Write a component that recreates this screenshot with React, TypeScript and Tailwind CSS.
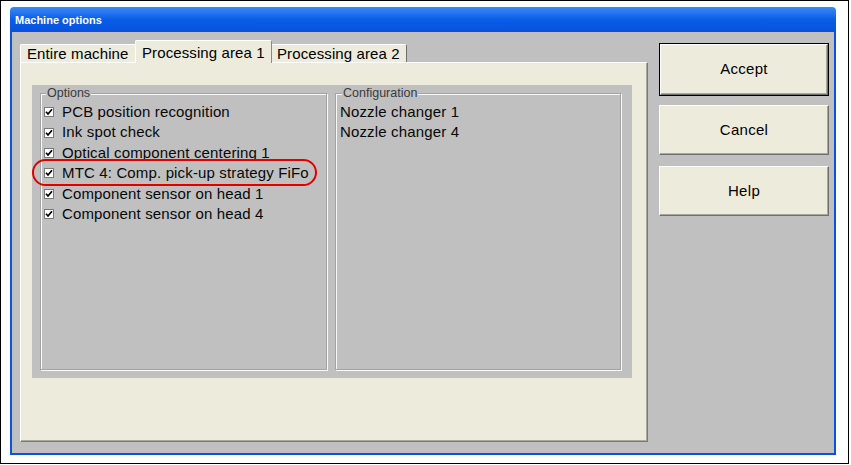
import React from "react";

const options = [
  "PCB position recognition",
  "Ink spot check",
  "Optical component centering 1",
  "MTC 4: Comp. pick-up strategy FiFo",
  "Component sensor on head 1",
  "Component sensor on head 4",
];

const config = ["Nozzle changer 1", "Nozzle changer 4"];

function Check() {
  return (
    <span className="w-[10px] h-[10px] bg-white border border-[#7a7a7a] flex items-center justify-center shrink-0">
      <svg width="8" height="8" viewBox="0 0 8 8">
        <path d="M1 3.8 L3 6 L7 1.2" stroke="#000" strokeWidth="1.7" fill="none" />
      </svg>
    </span>
  );
}

function Btn({ label, def }: { label: string; def?: boolean }) {
  const inner = (
    <div className="w-full h-full bg-[#ecebdc] border-t border-l border-white border-r border-b border-r-[#6f6f6f] border-b-[#6f6f6f] shadow-[inset_-1px_-1px_0_#a8a89a] flex items-center justify-center text-[15px] tracking-[0.3px] text-black">
      {label}
    </div>
  );
  return def ? (
    <div className="h-[53px] border border-black">{inner}</div>
  ) : (
    <div className="h-[50px]">{inner}</div>
  );
}

export default function App() {
  return (
    <div
      className="w-[851px] h-[465px] bg-white overflow-hidden"
      style={{ fontFamily: '"Liberation Sans", Arial, sans-serif' }}
    >
      <div className="w-[849px] h-[464px] border border-black pl-[9px] pt-[6px]">
        <div className="w-[826px] h-[448px] flex flex-col rounded-t-[4px] overflow-hidden">
          <div className="h-[25px] shrink-0 bg-gradient-to-b from-[#3a8af6] via-[#0b5ce8] to-[#0752de] flex items-center pl-[5px] pt-[2px] text-white font-bold text-[11px]">
            Machine options
          </div>
          <div className="flex-1 flex bg-[#c0c0c0] border-l-2 border-r-2 border-b-2 border-[#0a52e2] pl-[8px]">
            {/* tab control */}
            <div className="w-[628px] pt-[8px] flex flex-col">
              <div className="h-[22px] flex items-end text-[15px] tracking-[0.1px] text-black">
                <div className="w-[115px] h-[18px] bg-[#ecebdc] border-t border-l border-white rounded-tl-[2px] pl-[6px] flex items-center leading-none">
                  Entire machine
                </div>
                <div className="w-[137px] h-[23px] -mb-px relative z-10 bg-[#ecebdc] border-t border-l border-white border-r border-r-[#8a8a80] rounded-t-[2px] pl-[6px] pt-[1px] flex items-center leading-none">
                  Processing area 1
                </div>
                <div className="w-[135px] h-[18px] bg-[#ecebdc] border-t border-white border-r border-r-[#6f6f6f] rounded-tr-[2px] pl-[5px] flex items-center leading-none">
                  Processing area 2
                </div>
              </div>
              <div className="h-[380px] bg-[#ecebdc] border-t border-l border-white border-r border-b border-r-[#7a7a72] border-b-[#7a7a72] shadow-[inset_-1px_-1px_0_#a9a99c] pl-[11px] pt-[22px]">
                <div className="w-[600px] h-[293px] bg-[#c0c0c0] flex gap-[8px] pl-[8px] pt-[8px]">
                  {/* Options group */}
                  <div className="relative w-[287px] h-[277px] border border-[#a4a4a4] shadow-[1px_1px_0_#f8f8f8,inset_1px_1px_0_#f8f8f8] pl-[3px] pt-[8px]">
                    <span className="absolute -top-[9px] left-[5px] px-[1px] bg-[#c0c0c0] text-[12.5px] leading-[16px] text-[#3a3a3a]">
                      Options
                    </span>
                    {options.map((o) => (
                      <div key={o} className="h-[20.4px] flex items-center gap-[8px] text-[15px] tracking-[0.15px] text-[#080808] whitespace-nowrap">
                        <Check />
                        <span>{o}</span>
                      </div>
                    ))}
                    <div className="absolute left-[-9px] top-[65px] w-[285px] h-[27px] border-2 border-[#e00000] rounded-[14px] pointer-events-none" />
                  </div>
                  {/* Configuration group */}
                  <div className="relative w-[286px] h-[277px] border border-[#a4a4a4] shadow-[1px_1px_0_#f8f8f8,inset_1px_1px_0_#f8f8f8] pl-[4px] pt-[8px]">
                    <span className="absolute -top-[9px] left-[6px] px-[1px] bg-[#c0c0c0] text-[12.5px] leading-[16px] text-[#3a3a3a]">
                      Configuration
                    </span>
                    {config.map((c) => (
                      <div key={c} className="h-[20.4px] flex items-center text-[15px] tracking-[0.15px] text-[#080808] whitespace-nowrap">
                        {c}
                      </div>
                    ))}
                  </div>
                </div>
              </div>
            </div>
            {/* buttons */}
            <div className="w-[170px] ml-[11px] pt-[11px] flex flex-col">
              <Btn label="Accept" def />
              <div className="mt-[9px]">
                <Btn label="Cancel" />
              </div>
              <div className="mt-[11px]">
                <Btn label="Help" />
              </div>
            </div>
          </div>
        </div>
      </div>
    </div>
  );
}
